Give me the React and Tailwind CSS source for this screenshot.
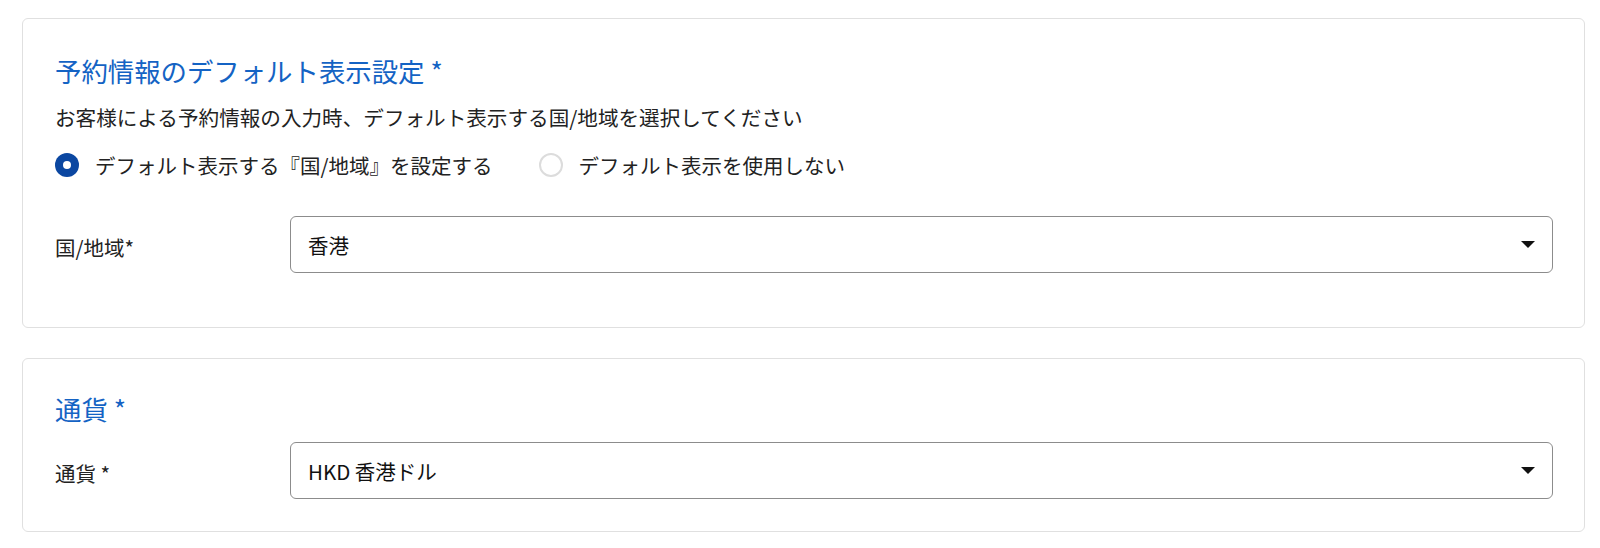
import { useState } from "react";

const FONT = "font-['Noto_Sans_CJK_JP','Noto_Sans',sans-serif]";

function Caret() {
  return (
    <svg width="14" height="7" viewBox="0 0 14 7" aria-hidden="true" className="shrink-0">
      <path d="M0 0h14L7 7z" fill="#111" />
    </svg>
  );
}

function Radio({ checked, label, onClick }) {
  return (
    <button type="button" onClick={onClick} className="flex items-center gap-[16px]">
      {checked ? (
        <span className="flex h-[24px] w-[24px] items-center justify-center rounded-full bg-[#0b47a1]">
          <span className="h-[8px] w-[8px] rounded-full bg-white" />
        </span>
      ) : (
        <span className="h-[24px] w-[24px] rounded-full border-2 border-[#dcdcdc] bg-white" />
      )}
      <span className="text-[20.5px] leading-[30px] text-[#222]">{label}</span>
    </button>
  );
}

function SelectField({ label, value }) {
  return (
    <div className="flex items-center">
      <span className="w-[235px] shrink-0 pt-[5px] text-[20.5px] leading-[30px] text-[#222]">{label}</span>
      <div className="flex h-[57px] flex-1 items-center justify-between rounded-[6px] border border-[#8c8c8c] bg-white pl-[17px] pr-[17px]">
        <span className="text-[20.5px] leading-[30px] text-[#111]">{value}</span>
        <Caret />
      </div>
    </div>
  );
}

export default function App() {
  const [useDefault, setUseDefault] = useState(true);

  return (
    <div className={`min-h-[548px] bg-white pl-[22px] pr-[15px] pt-[18px] ${FONT}`}>
      {/* 予約情報 */}
      <section className="rounded-[6px] border border-[#e0e0e0] bg-white pb-[54px] pl-[32px] pr-[31px] pt-[34px]">
        <h2 className="text-[26.4px] leading-[36px] text-[#1463c4]">予約情報のデフォルト表示設定 *</h2>
        <p className="mt-[13px] text-[20.6px] leading-[30px] text-[#222]">
          お客様による予約情報の入力時、デフォルト表示する国/地域を選択してください
        </p>
        <div className="mt-[18px] flex items-center gap-[46px]">
          <Radio
            checked={useDefault}
            onClick={() => setUseDefault(true)}
            label="デフォルト表示する『国/地域』を設定する"
          />
          <Radio
            checked={!useDefault}
            onClick={() => setUseDefault(false)}
            label="デフォルト表示を使用しない"
          />
        </div>
        <div className="mt-[36px]">
          <SelectField label="国/地域*" value="香港" />
        </div>
      </section>

      {/* 通貨 */}
      <section className="mt-[30px] rounded-[6px] border border-[#e0e0e0] bg-white pb-[32px] pl-[32px] pr-[31px] pt-[32px]">
        <h2 className="text-[26.4px] leading-[36px] text-[#1463c4]">通貨 *</h2>
        <div className="mt-[15px]">
          <SelectField label="通貨 *" value="HKD 香港ドル" />
        </div>
      </section>
    </div>
  );
}
